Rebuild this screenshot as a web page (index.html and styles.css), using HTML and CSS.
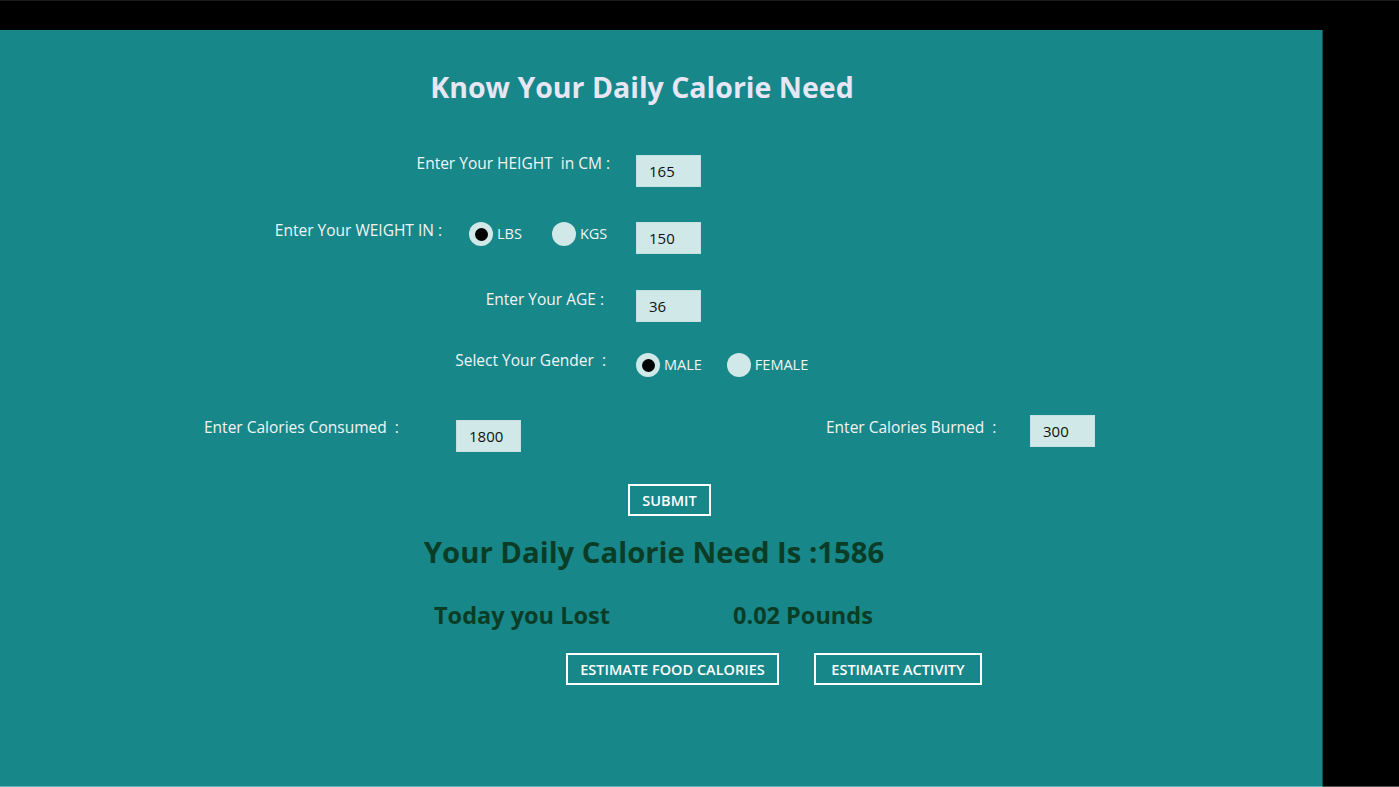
FILE: index.html
```html
<!DOCTYPE html>
<html lang="en">
<head>
<meta charset="utf-8">
<title>Know Your Daily Calorie Need</title>
<link rel="stylesheet" href="styles.css">
</head>
<body>
<div class="screen">
  <div class="topbar"></div>
  <div class="main">
    <div class="panel">
      <h1 class="title">Know Your Daily Calorie Need</h1>

      <div class="row grid r1">
        <div class="lbl span2 pr26">Enter Your HEIGHT&nbsp; in CM :</div>
        <div class="field">165</div>
      </div>

      <div class="row grid r2">
        <div class="lbl pr27">Enter Your WEIGHT IN :</div>
        <div class="radios">
          <span class="radio checked"></span><span class="rtext">LBS</span>
          <span class="radio gapl"></span><span class="rtext">KGS</span>
        </div>
        <div class="field">150</div>
      </div>

      <div class="row grid r3">
        <div class="lbl span2 pr32">Enter Your AGE :</div>
        <div class="field">36</div>
      </div>

      <div class="row grid r4">
        <div class="lbl span2 pr30">Select Your Gender&nbsp; :</div>
        <div class="radios">
          <span class="radio checked"></span><span class="rtext">MALE</span>
          <span class="radio gapl2"></span><span class="rtext">FEMALE</span>
        </div>
      </div>

      <div class="row cal">
        <div class="lbl cal-l1">Enter Calories Consumed&nbsp; :</div>
        <div class="field low">1800</div>
        <div class="lbl cal-l2">Enter Calories Burned&nbsp; :</div>
        <div class="field">300</div>
      </div>

      <div class="submit-row">
        <button class="btn submit">SUBMIT</button>
      </div>

      <div class="result">Your Daily Calorie Need Is :1586</div>

      <div class="lost">
        <span class="lost-l">Today you Lost</span>
        <span class="lost-v">0.02 Pounds</span>
      </div>

      <div class="actions">
        <button class="btn wide">ESTIMATE FOOD CALORIES</button>
        <button class="btn wide2">ESTIMATE ACTIVITY</button>
      </div>
    </div>
    <div class="side"></div>
  </div>
</div>
</body>
</html>
```

FILE: styles.css
```css
* { box-sizing: border-box; }
html, body { margin: 0; padding: 0; background: #000; }
body {
  font-family: "Open Sans", "Noto Sans", sans-serif;
  width: 1399px;
  height: 787px;
  overflow: hidden;
}
.screen { display: flex; flex-direction: column; height: 787px; }
.topbar { height: 30px; background: #000; border-top: 1px solid #1a1a1a; }
.main { display: flex; flex: 1; }
.panel {
  width: 1323px;
  height: 757px;
  background: #17878a;
  border-bottom: 1px solid #5fb5b5;
  border-right: 1px solid #0d5457;
  display: flex;
  flex-direction: column;
}
.side { flex: 1; background: #000; border-bottom: 1px solid #555; }

.title {
  margin: 37px 0 0 0;
  width: 1284px;
  text-align: center;
  font-size: 28.5px;
  line-height: 40px;
  font-weight: 700;
  color: #e6e6f4;
}

.row { align-items: start; }
.grid { display: grid; grid-template-columns: 469px 167px auto; }
.r1 { margin-top: 48px; }
.r2 { margin-top: 35px; }
.r3 { margin-top: 36px; }
.r4 { margin-top: 31px; }

.lbl {
  color: #f2f4f4;
  font-size: 15.5px;
  line-height: 18px;
  white-space: nowrap;
  text-align: right;
}
.span2 { grid-column: 1 / 3; }
.pr26 { padding-right: 26px; }
.pr27 { padding-right: 27px; }
.pr32 { padding-right: 32px; }
.pr30 { padding-right: 30px; }
.r1 .lbl { margin-top: -1px; }
.r2 .lbl { margin-top: -1px; }
.r3 .lbl { margin-top: 0; }
.r4 .lbl { margin-top: -2px; }

.field {
  width: 65px;
  height: 32px;
  background: #d0e8e8;
  border: 1px solid #c4e0e0;
  color: #111;
  font-size: 15px;
  line-height: 30px;
  padding-left: 12px;
}

.radios { display: flex; align-items: center; height: 24px; }
.radio {
  width: 24px;
  height: 24px;
  border-radius: 50%;
  background: #d0e8e8;
  display: inline-flex;
  align-items: center;
  justify-content: center;
  flex: none;
}
.radio.checked::after {
  content: "";
  width: 13px;
  height: 13px;
  border-radius: 50%;
  background: #000;
}
.rtext {
  color: #f2f4f4;
  font-size: 14.5px;
  margin-left: 4px;
  line-height: 24px;
}
.gapl { margin-left: 30px; }
.gapl2 { margin-left: 25px; }

.cal {
  display: flex;
  margin-top: 38px;
  padding-left: 204px;
}
.cal-l1 { width: 252px; text-align: left; margin-top: 3px; }
.cal-l2 { width: 204px; text-align: left; margin-top: 3px; margin-left: 305px; }
.field.low { margin-top: 5px; }

.submit-row { margin-top: 32px; padding-left: 628px; display: flex; }
.btn {
  font-family: inherit;
  background: transparent;
  border: 2px solid #fff;
  color: #fff;
  font-weight: 600;
  font-size: 14.5px;
  height: 32px;
  padding: 0;
  cursor: pointer;
}
.submit { width: 83px; }

.result {
  margin-top: 18px;
  width: 1308px;
  text-align: center;
  font-size: 29.3px;
  line-height: 36px;
  font-weight: 700;
  color: #0b3d26;
}

.lost {
  margin-top: 29px;
  padding-left: 434px;
  display: flex;
  font-size: 23.5px;
  line-height: 32px;
  font-weight: 700;
  color: #0b3d26;
}
.lost-l { width: 299px; }

.actions {
  margin-top: 22px;
  padding-left: 566px;
  display: flex;
  gap: 35px;
}
.wide { width: 213px; }
.wide2 { width: 168px; }
```
